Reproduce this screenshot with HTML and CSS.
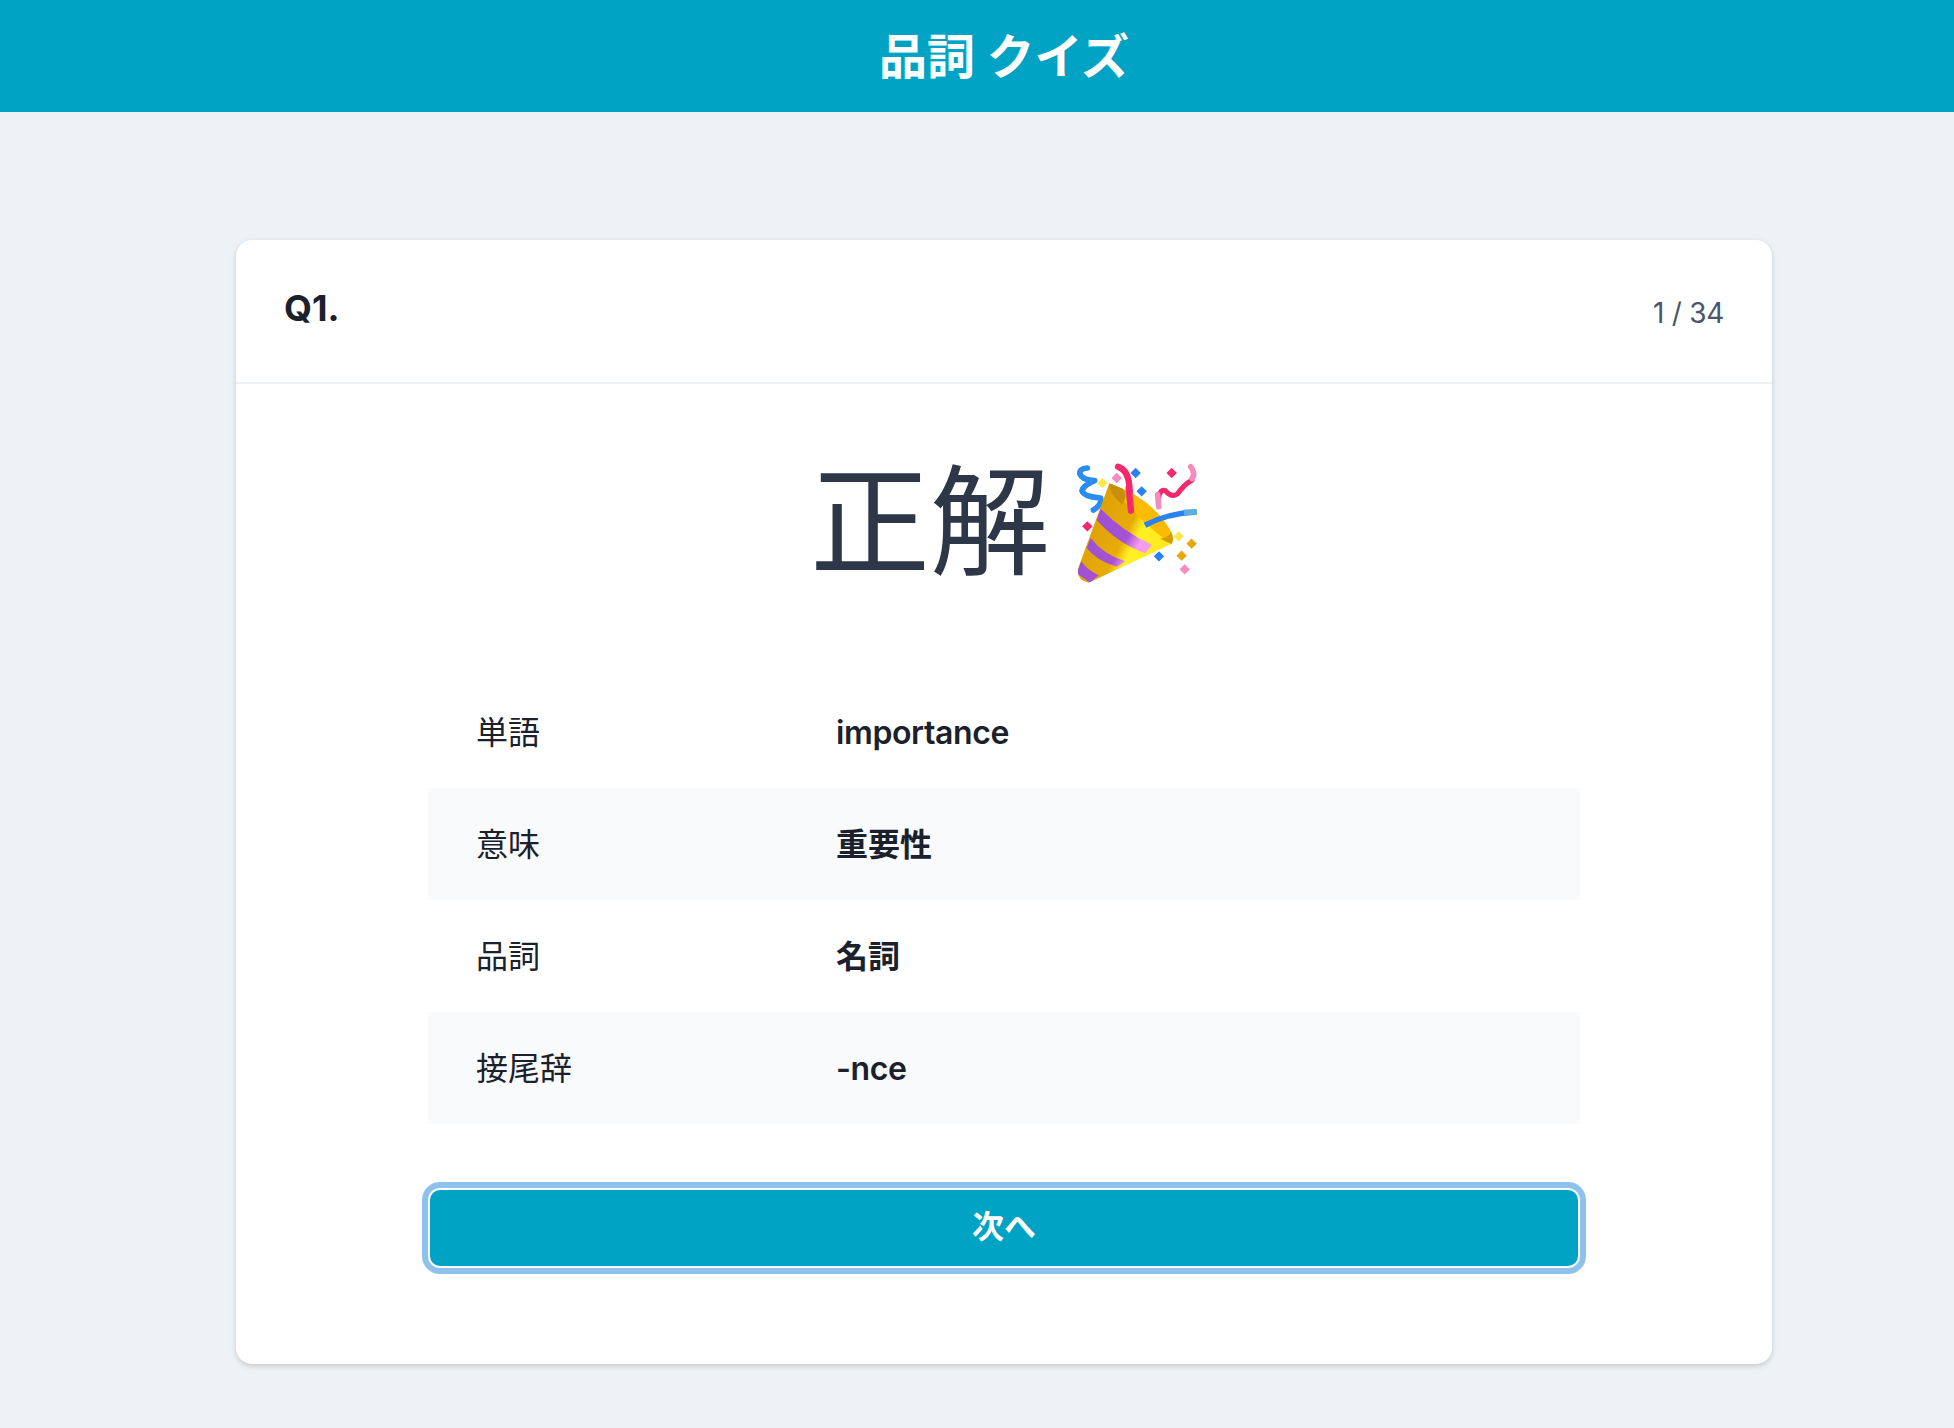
FILE: index.html
```html
<!DOCTYPE html>
<html lang="ja">
<head>
  <meta charset="UTF-8">
  <meta name="viewport" content="width=device-width, initial-scale=1.0">
  <title>品詞 クイズ</title>
  <link rel="stylesheet" href="styles.css">
</head>
<body>
  <div class="app">
    <header class="site-header">
      <h1 class="site-title">品詞 クイズ</h1>
    </header>

    <main class="card">
      <div class="card-header">
        <span class="question-no">Q1.</span>
        <span class="progress">1 / 34</span>
      </div>

      <div class="card-body">
        <h2 class="result">
          <span>正解</span>
          <!-- party popper -->
          <svg class="popper" viewBox="0 0 450 435" aria-label="🎉">
            <defs>
              <clipPath id="coneClip">
                <path d="M148 106 L54 362 Q48 396 86 404 L334 288 Q348 272 322 232 Q270 150 148 106 Z"/>
              </clipPath>
              <linearGradient id="coneFill" gradientUnits="userSpaceOnUse" x1="80" y1="230" x2="300" y2="340">
                <stop offset="0" stop-color="#dea008"/>
                <stop offset="0.48" stop-color="#e8ac08"/>
                <stop offset="0.62" stop-color="#fff024"/>
                <stop offset="1" stop-color="#ffe81e"/>
              </linearGradient>
              <linearGradient id="stripeFill" gradientUnits="userSpaceOnUse" x1="70" y1="200" x2="300" y2="340">
                <stop offset="0" stop-color="#9b4fd0"/>
                <stop offset="0.55" stop-color="#a552d4"/>
                <stop offset="0.7" stop-color="#f59cf0"/>
                <stop offset="0.88" stop-color="#f59cf0"/>
                <stop offset="1" stop-color="#8f7fa8"/>
              </linearGradient>
            </defs>

            <path class="ribbon blue" d="M82 60 Q56 62 60 78 Q66 96 104 98 Q70 112 66 128 Q70 146 122 150 Q126 170 100 186"/>
            <path class="ribbon red" d="M174 56 Q204 66 208 112 L213 188"/>
            <path class="ribbon red thin" d="M296 150 Q300 122 316 128 Q334 150 352 138 Q372 110 396 96"/>
            <path class="ribbon pink" d="M296 176 L293 140"/>
            <path class="ribbon pink" d="M396 92 Q408 78 392 56"/>

            <g clip-path="url(#coneClip)">
              <rect x="40" y="90" width="320" height="330" fill="url(#coneFill)"/>
              <path class="stripe" d="M122 182 Q190 252 276 290 L256 316 Q172 286 110 216 Z"/>
              <path class="stripe" d="M92 270 Q130 320 196 340 L170 356 Q112 340 80 300 Z"/>
              <path class="stripe" d="M64 340 Q80 365 116 382 L90 404 L50 376 Z"/>
              <path d="M148 106 Q270 150 322 232 Q348 272 334 288 Q280 250 240 210 Q180 150 148 106 Z" fill="#fdbb05"/>
              <path d="M148 106 Q142 130 186 170 Q220 120 148 106 Z" fill="#c8900a"/>
              <path d="M300 272 Q330 270 334 246 Q350 276 334 288 Z" fill="#d99a08"/>
            </g>
            <path class="ribbon red" d="M206 120 L213 188"/>
            <path class="ribbon streamer" d="M255 232 Q320 196 410 192"/>
            <path class="ribbon streamer-end" d="M372 193 L410 192"/>

            <g>
              <rect class="bit" x="116" y="94" width="22" height="22" fill="#ffe94a"/>
              <rect class="bit" x="159" y="79" width="22" height="22" fill="#f58cc0"/>
              <rect class="bit" x="216" y="64" width="22" height="22" fill="#2a82f0"/>
              <rect class="bit" x="234" y="119" width="22" height="22" fill="#2a82f0"/>
              <rect class="bit" x="324" y="64" width="22" height="22" fill="#f5286b"/>
              <rect class="bit" x="71" y="224" width="22" height="22" fill="#f5286b"/>
              <rect class="bit" x="345" y="254" width="22" height="22" fill="#ffe94a"/>
              <rect class="bit" x="384" y="276" width="22" height="22" fill="#e6a80a"/>
              <rect class="bit" x="354" y="312" width="22" height="22" fill="#e6a80a"/>
              <rect class="bit" x="286" y="314" width="22" height="22" fill="#2a82f0"/>
              <rect class="bit" x="363" y="353" width="22" height="22" fill="#f58cc0"/>
            </g>
          </svg>
        </h2>

        <table class="answer-table">
          <tbody>
            <tr>
              <th>単語</th>
              <td class="latin">importance</td>
            </tr>
            <tr>
              <th>意味</th>
              <td>重要性</td>
            </tr>
            <tr>
              <th>品詞</th>
              <td>名詞</td>
            </tr>
            <tr>
              <th>接尾辞</th>
              <td class="latin">-nce</td>
            </tr>
          </tbody>
        </table>

        <button type="button" class="btn-next">次へ</button>
      </div>
    </main>
  </div>
</body>
</html>
```

FILE: styles.css
```css
* {
  margin: 0;
  padding: 0;
  box-sizing: border-box;
}

body {
  font-family: Inter, "Noto Sans CJK JP", sans-serif;
  color: #1a202c;
  background: #edf2f7;
  overflow: hidden;
}

/* the layout is a little wider than the window, right side gets cut */
.app {
  width: 2008px;
  height: 1428px;
}

.site-header {
  height: 112px;
  padding-bottom: 7px;
  background: #00a3c4;
  display: flex;
  align-items: center;
  justify-content: center;
}

.site-title {
  font-size: 48px;
  font-weight: 700;
  color: #fff;
}

.card {
  width: 1536px;
  margin: 128px auto 0;
  background: #fff;
  border-radius: 16px;
  box-shadow: 0 2px 6px rgba(0, 0, 0, 0.12), 0 2px 4px rgba(0, 0, 0, 0.06);
}

.card-header {
  height: 144px;
  padding: 0 48px;
  display: flex;
  align-items: center;
  justify-content: space-between;
  border-bottom: 2px solid #edf2f7;
}

.question-no {
  font-size: 36px;
  font-weight: 700;
  margin-top: -7px;
}

.progress {
  font-size: 28px;
  letter-spacing: -0.01em;
  color: #4a5568;
  margin-top: 3px;
}

.card-body {
  padding: 76px 192px 96px;
}

.result {
  height: 120px;
  margin-bottom: 96px;
  display: flex;
  align-items: center;
  justify-content: center;
  gap: 10px;
  font-size: 120px;
  line-height: 1;
  font-weight: 400;
  color: #2d3748;
}

.result span {
  padding-top: 6px;
}

.popper {
  width: 150px;
  height: 145px;
  flex: none;
  margin-right: -12px;
}

.ribbon {
  fill: none;
  stroke-width: 17;
  stroke-linecap: round;
  stroke-linejoin: round;
}

.ribbon.blue { stroke: #2a8cf0; }
.ribbon.red { stroke: #f5286b; stroke-width: 19; }
.ribbon.thin { stroke-width: 15; }
.ribbon.pink { stroke: #f58cc0; stroke-width: 17; }
.ribbon.streamer { stroke: #2a82f0; stroke-linecap: butt; }
.ribbon.streamer-end { stroke: #5aaee0; stroke-linecap: butt; }

.stripe {
  fill: url(#stripeFill);
}

.bit {
  transform-box: fill-box;
  transform-origin: center;
  transform: rotate(45deg);
}

.answer-table {
  width: 100%;
  border-collapse: collapse;
  font-size: 32px;
}

.answer-table tr {
  height: 112px;
}

.answer-table tr:nth-child(even) {
  background: #f9fafb;
}

.answer-table th {
  width: 408px;
  padding: 0 0 4px 48px;
  text-align: left;
  font-weight: 400;
}

.answer-table td {
  padding-bottom: 4px;
  font-weight: 600;
}

.answer-table td.latin {
  padding-bottom: 0;
  letter-spacing: -0.012em;
}

.btn-next {
  display: block;
  width: 100%;
  height: 80px;
  margin-top: 64px;
  padding-bottom: 9px;
  border: 2px solid #fff;
  border-radius: 12px;
  background: #00a3c4;
  color: #fff;
  font: inherit;
  font-size: 32px;
  font-weight: 600;
  box-shadow: 0 0 0 6px rgba(66, 153, 225, 0.6);
  cursor: pointer;
}
```
